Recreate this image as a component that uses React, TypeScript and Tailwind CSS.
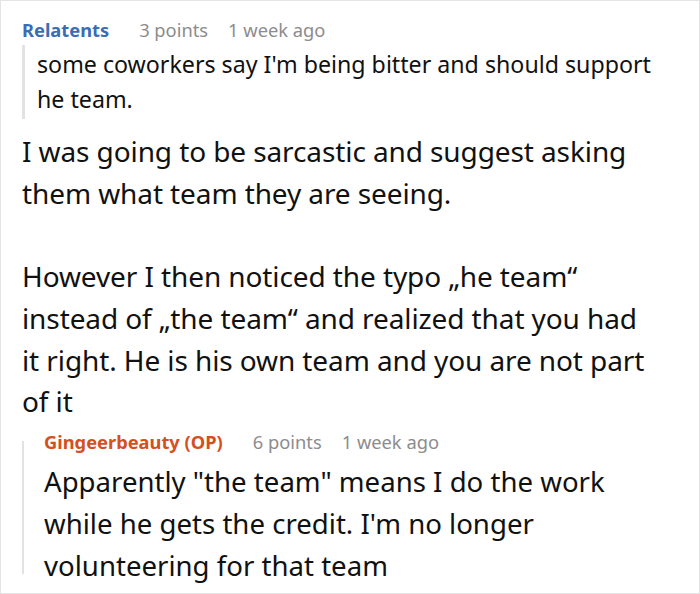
import React from "react";

const font = { fontFamily: '"Noto Sans", "Open Sans", sans-serif' };

function Header({ name, color, points }: { name: string; color: string; points: string }) {
  return (
    <div className="flex items-center text-[18.3px] leading-[24px]">
      <span className={`font-bold ${color}`}>{name}</span>
      <span className="ml-[30px] text-[#8c8c8c]">{points}</span>
      <span className="ml-[20px] text-[#8c8c8c]">1 week ago</span>
    </div>
  );
}

export default function App() {
  return (
    <div
      style={font}
      className="w-[700px] h-[594px] overflow-hidden border border-[#e4e4e4] bg-white text-[#111]"
    >
      <div className="pl-[21px] pr-[22px] pt-[17px]">
        <Header name="Relatents" color="text-[#3b6db5]" points="3 points" />
        <div className="mt-[3px] border-l-[3px] border-[#e2e2e2] pl-[12px] text-[23.2px] leading-[35px] py-[2px]">
          some coworkers say I'm being bitter and should support he team.
        </div>
        <div className="mt-[12px] text-[28px] leading-[41.7px] tracking-[-0.1px]">
          <p>
            I was going to be sarcastic and suggest asking
            <br />
            them what team they are seeing.
          </p>
          <p className="mt-[41.7px]">
            However I then noticed the typo „he team“
            <br />
            instead of „the team“ and realized that you had
            <br />
            it right. He is his own team and you are not part
            <br />
            of it
          </p>
        </div>
        <div className="mt-[7px] flex">
          <div className="mt-[11px] mb-[12px] w-[2px] shrink-0 bg-[#e2e2e2]" />
          <div className="pl-[20px] flex-1">
            <Header name="Gingeerbeauty (OP)" color="text-[#d4501e]" points="6 points" />
            <div className="mt-[6px] text-[27.6px] leading-[42px]">
              Apparently "the team" means I do the work while he gets the credit. I'm no longer volunteering for that
              team
            </div>
          </div>
        </div>
      </div>
    </div>
  );
}
